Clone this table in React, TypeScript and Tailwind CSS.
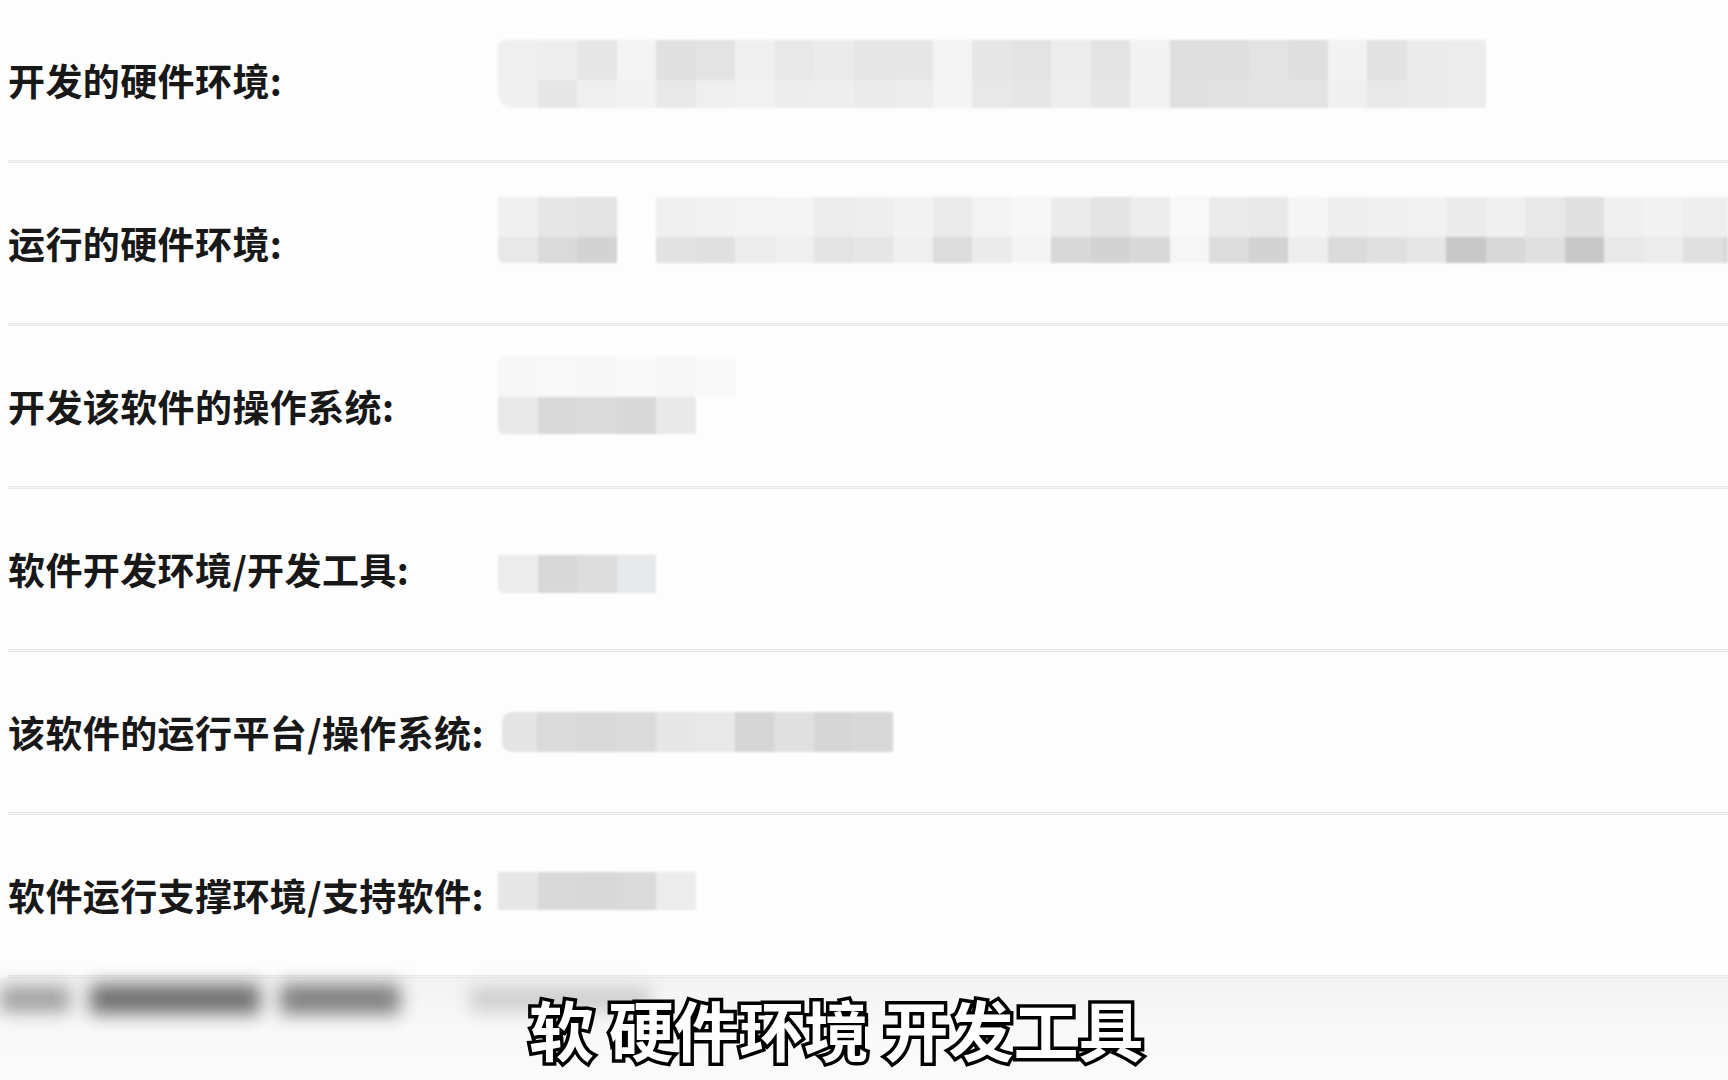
import React from 'react';

// pixelated value blocks, one string per cell (top row / bottom row)
const W = 'w-[39.5px] shrink-0';

const ROW1_TOP = [
  'bg-[#efefef]', 'bg-[#eeeeee]', 'bg-[#e6e6e6]', 'bg-[#f3f3f3]', 'bg-[#e0e0e0]', 'bg-[#e3e3e3]', 'bg-[#f0f0f0]',
  'bg-[#e8e8e8]', 'bg-[#ebebeb]', 'bg-[#e5e5e5]', 'bg-[#e6e6e6]', 'bg-[#f3f3f3]', 'bg-[#e6e6e6]', 'bg-[#e3e3e3]',
  'bg-[#ececec]', 'bg-[#e3e3e3]', 'bg-[#f2f2f2]', 'bg-[#dedede]', 'bg-[#dfdfdf]', 'bg-[#e3e3e3]', 'bg-[#dfdfdf]',
  'bg-[#f2f2f2]', 'bg-[#e2e2e2]', 'bg-[#ebebeb]', 'bg-[#ececec]',
];
const ROW1_BOTTOM = [
  'bg-[#f0f0f0]', 'bg-[#e6e6e6]', 'bg-[#efefef]', 'bg-[#f2f2f2]', 'bg-[#e8e8e8]', 'bg-[#efefef]', 'bg-[#f1f1f1]',
  'bg-[#ededed]', 'bg-[#eeeeee]', 'bg-[#ebebeb]', 'bg-[#ececec]', 'bg-[#f4f4f4]', 'bg-[#e8e8e8]', 'bg-[#e6e6e6]',
  'bg-[#eeeeee]', 'bg-[#e6e6e6]', 'bg-[#f2f2f2]', 'bg-[#e0e0e0]', 'bg-[#e2e2e2]', 'bg-[#e4e4e4]', 'bg-[#e3e3e3]',
  'bg-[#f0f0f0]', 'bg-[#e8e8e8]', 'bg-[#ebebeb]', 'bg-[#ececec]',
];

const ROW2_TOP = [
  'bg-[#f0f0f0]', 'bg-[#e6e6e6]', 'bg-[#e3e3e3]', 'bg-transparent', 'bg-[#f0f0f0]', 'bg-[#f2f2f2]', 'bg-[#f3f3f3]',
  'bg-[#f4f4f4]', 'bg-[#ececec]', 'bg-[#eeeeee]', 'bg-[#f2f2f2]', 'bg-[#eaeaea]', 'bg-[#f3f3f3]', 'bg-[#f7f7f7]',
  'bg-[#ebebeb]', 'bg-[#e3e3e3]', 'bg-[#ececec]', 'bg-[#f8f8f8]', 'bg-[#ebebeb]', 'bg-[#e9e9e9]', 'bg-[#f5f5f5]',
  'bg-[#eeeeee]', 'bg-[#f0f0f0]', 'bg-[#f1f1f1]', 'bg-[#ebebeb]', 'bg-[#f0f0f0]', 'bg-[#e8e8e8]', 'bg-[#e0e0e0]',
  'bg-[#f0f0f0]', 'bg-[#f2f2f2]', 'bg-[#eeeeee]', 'bg-[#eeeeee]',
];
const ROW2_BOTTOM = [
  'bg-[#e8e8e8]', 'bg-[#dadada]', 'bg-[#d3d3d3]', 'bg-transparent', 'bg-[#e2e2e2]', 'bg-[#e0e0e0]', 'bg-[#ececec]',
  'bg-[#efefef]', 'bg-[#e3e3e3]', 'bg-[#e6e6e6]', 'bg-[#efefef]', 'bg-[#dcdcdc]', 'bg-[#ebebeb]', 'bg-[#f4f4f4]',
  'bg-[#d8d8d8]', 'bg-[#d3d3d3]', 'bg-[#d8d8d8]', 'bg-[#f6f6f6]', 'bg-[#dcdcdc]', 'bg-[#d3d3d3]', 'bg-[#eeeeee]',
  'bg-[#dadada]', 'bg-[#e0e0e0]', 'bg-[#e6e6e6]', 'bg-[#c8c8c8]', 'bg-[#d8d8d8]', 'bg-[#e0e0e0]', 'bg-[#c8c8c8]',
  'bg-[#e8e8e8]', 'bg-[#ececec]', 'bg-[#e0e0e0]', 'bg-[#d8d8d8]',
];

const ROW3_FAINT = ['bg-[#f7f7f7]', 'bg-[#f8f8f8]', 'bg-[#f6f6f6]', 'bg-[#f9f9f9]', 'bg-[#f7f7f7]', 'bg-[#f9f9f9]'];
const ROW3 = ['bg-[#e8e8e8]', 'bg-[#d9d9d9]', 'bg-[#dbdbdb]', 'bg-[#d8d8d8]', 'bg-[#e9e9e9]'];
const ROW4 = ['bg-[#ececec]', 'bg-[#d8d8d8]', 'bg-[#dcdcdc]', 'bg-[#e6e8ea]'];
const ROW5 = [
  'bg-[#dadada]', 'bg-[#d9d9d9]', 'bg-[#dbdbdb]', 'bg-[#e6e6e6]', 'bg-[#e8e8e8]', 'bg-[#d5d5d5]', 'bg-[#e0e0e0]',
  'bg-[#d6d6d6]', 'bg-[#d8d8d8]',
];
const ROW6 = ['bg-[#e6e6e6]', 'bg-[#d9d9d9]', 'bg-[#d8d8d8]', 'bg-[#dadada]', 'bg-[#ececec]'];

function Cells({ cells, h }: { cells: string[]; h: string }) {
  return (
    <div className={`flex ${h}`}>
      {cells.map((c, i) => (
        <div key={i} className={`${W} ${c}`} />
      ))}
    </div>
  );
}

function Row({ label, children }: { label: string; children: React.ReactNode }) {
  return (
    <>
      <div className="flex h-[160px]">
        <div className="flex w-[498px] shrink-0 items-center pl-[8px] pt-[1px] text-[37px] font-bold leading-none tracking-[0.4px] text-[#181818]">
          <span className="whitespace-nowrap">{label}</span>
        </div>
        <div className="min-w-0 flex-1">{children}</div>
      </div>
      <div className="ml-[8px] h-[3px] border-y border-[#e8e8e8] bg-[#f4f4f4]" />
    </>
  );
}

export default function App() {
  return (
    <div className="relative h-[1080px] w-full overflow-hidden bg-[#fdfdfd] font-['Noto_Sans_CJK_SC',sans-serif]">
      <Row label="开发的硬件环境:">
        <div className="mt-[40px] w-fit overflow-hidden rounded-bl-[14px] rounded-tl-[6px] blur-[1px]">
          <Cells cells={ROW1_TOP} h="h-[40px]" />
          <Cells cells={ROW1_BOTTOM} h="h-[28px]" />
        </div>
      </Row>

      <Row label="运行的硬件环境:">
        <div className="mt-[34px] overflow-hidden rounded-bl-[6px] blur-[1px]">
          <Cells cells={ROW2_TOP} h="h-[40px]" />
          <Cells cells={ROW2_BOTTOM} h="h-[26px]" />
        </div>
      </Row>

      <Row label="开发该软件的操作系统:">
        <div className="mt-[31px] w-fit blur-[1px]">
          <Cells cells={ROW3_FAINT} h="h-[40px]" />
          <div className="w-fit overflow-hidden rounded-bl-[6px]">
            <Cells cells={ROW3} h="h-[37px]" />
          </div>
        </div>
      </Row>

      <Row label="软件开发环境/开发工具:">
        <div className="mt-[66px] w-fit overflow-hidden rounded-bl-[6px] blur-[1px]">
          <Cells cells={ROW4} h="h-[38px]" />
        </div>
      </Row>

      <Row label="该软件的运行平台/操作系统:">
        <div className="mt-[60px] ml-[4px] flex h-[40px] w-fit overflow-hidden rounded-l-[10px] blur-[1px]">
          <div className="w-[35px] bg-[#e4e4e4]" />
          <Cells cells={ROW5} h="h-[40px]" />
        </div>
      </Row>

      <Row label="软件运行支撑环境/支持软件:">
        <div className="mt-[57px] w-fit blur-[1px]">
          <Cells cells={ROW6} h="h-[38px]" />
        </div>
      </Row>

      {/* next row scrolling in, motion-blurred */}
      <div className="h-[110px] bg-gradient-to-b from-[#f3f3f3] via-[#f9f9f9] to-[#fafafa]">
        <div className="flex items-center gap-[20px] pt-[6px] blur-[9px]">
          <div className="h-[26px] w-[70px] bg-[#a0a0a0]" />
          <div className="h-[30px] w-[170px] bg-[#707070]" />
          <div className="h-[30px] w-[120px] bg-[#808080]" />
          <div className="ml-[50px] h-[24px] w-[180px] bg-[#cccccc]" />
        </div>
      </div>

      {/* subtitle */}
      <div className="absolute left-[529px] top-[996px] whitespace-pre text-[65px] font-bold leading-none text-white [-webkit-text-stroke:7px_#000] [paint-order:stroke_fill]">
        软 硬件环境 开发工具
      </div>
    </div>
  );
}
